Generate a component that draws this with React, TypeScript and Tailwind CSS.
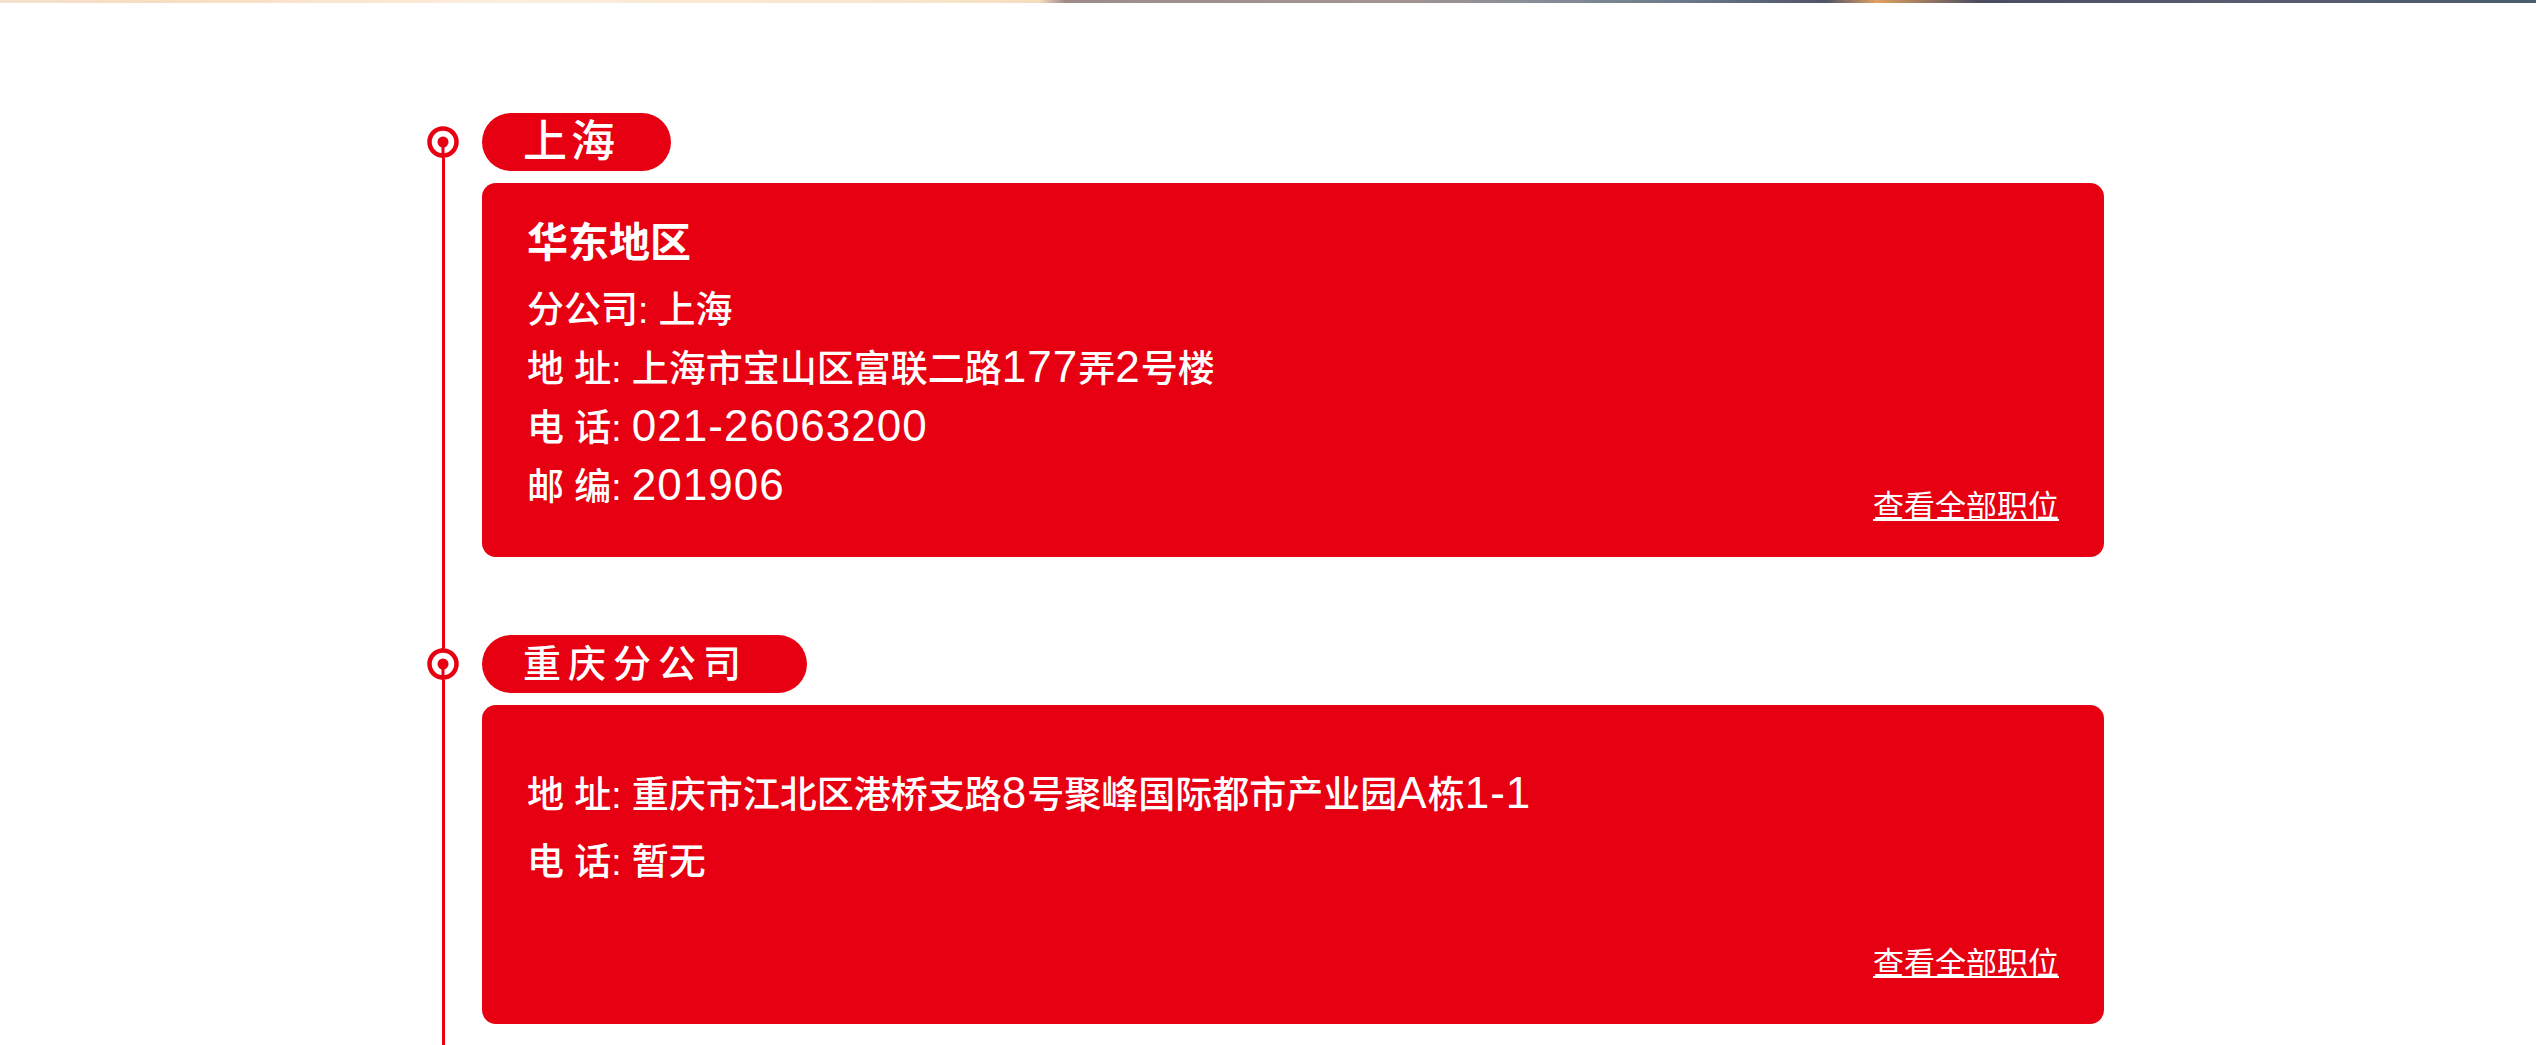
import React from 'react'

const RED = '#e60012'

type Office = {
  city: string
  cityClass: string
  pillWidth: string
  title?: string
  lines: string[]
  bodyClass: string
  linkClass: string
}

const offices: Office[] = [
  {
    city: '上海',
    cityClass: 'text-[44px] tracking-[4px]',
    pillWidth: 'w-[189px]',
    title: '华东地区',
    lines: ['分公司: 上海', '地 址: 上海市宝山区富联二路177弄2号楼', '电 话: 021-26063200', '邮 编: 201906'],
    bodyClass: 'pt-[30px] pb-[30px]',
    linkClass: '-mt-[30px]',
  },
  {
    city: '重庆分公司',
    cityClass: 'text-[38px] tracking-[7px]',
    pillWidth: 'w-[325px]',
    lines: ['地 址: 重庆市江北区港桥支路8号聚峰国际都市产业园A栋1-1', '电 话: 暂无'],
    bodyClass: 'pt-[61px] pb-[40px]',
    linkClass: 'mt-[52px]',
  },
]

// latin letters and digits run wider than the CJK glyphs, like YaHei does
const Mixed = ({ text }: { text: string }) => (
  <>
    {text.split(/([0-9A-Za-z\-]+)/).map((part, i) =>
      /^[0-9A-Za-z\-]+$/.test(part) ? (
        <span key={i} className="text-[44px] leading-none tracking-[1px]">
          {part}
        </span>
      ) : (
        <React.Fragment key={i}>{part}</React.Fragment>
      )
    )}
  </>
)

const Dot = ({ first }: { first: boolean }) => (
  <svg width="32" height="32" viewBox="0 0 32 32" className="shrink-0">
    {!first && <line x1="16" y1="0" x2="16" y2="16" stroke={RED} strokeWidth="3" />}
    <circle cx="16" cy="16" r="13.5" fill="#fff" stroke={RED} strokeWidth="4.5" />
    <line x1="16" y1="16" x2="16" y2="32" stroke={RED} strokeWidth="3" />
    <circle cx="16" cy="16" r="5.5" fill={RED} />
  </svg>
)

const OfficeItem = ({ office, first, last }: { office: Office; first: boolean; last: boolean }) => (
  <div className="flex gap-[23px]">
    <div className="flex w-[32px] flex-col items-center">
      <div className={`h-[13px] w-[3px] ${first ? '' : 'bg-[#e60012]'}`} />
      <Dot first={first} />
      <div className="w-[3px] flex-1 bg-[#e60012]" />
    </div>
    <div className={`flex w-[1622px] flex-col ${last ? 'pb-[80px]' : 'pb-[78px]'}`}>
      <div
        className={`flex h-[58px] items-center rounded-full bg-[#e60012] pl-[41px] font-medium leading-none text-white ${office.pillWidth} ${office.cityClass}`}
      >
        {office.city}
      </div>
      <div className={`mt-[12px] flex flex-col rounded-[14px] bg-[#e60012] pl-[45px] pr-[45px] text-white ${office.bodyClass}`}>
        {office.title && (
          <div className="mb-[8px] text-[41px] font-bold leading-[60px]">{office.title}</div>
        )}
        {office.lines.map((line, i) => (
          <div
            key={i}
            className={`text-[37px] font-medium leading-[59px] ${i > 0 && !office.title ? 'mt-[8px]' : ''}`}
          >
            <Mixed text={line} />
          </div>
        ))}
        <div className={`flex justify-end ${office.linkClass}`}>
          <a className="text-[31px] leading-[40px] underline decoration-[2px] underline-offset-[2px]">
            查看全部职位
          </a>
        </div>
      </div>
    </div>
  </div>
)

export default function App() {
  return (
    <div
      className="min-h-screen overflow-hidden bg-white"
      style={{ fontFamily: '"Liberation Sans", "Noto Sans CJK SC", sans-serif' }}
    >
      <div className="h-[3px] w-full bg-[linear-gradient(90deg,#f3e2cf_0%,#f8dcc0_6%,#fbeedd_20%,#f7e3c8_38%,#f6dcbc_41%,#9d8c8a_42%,#a39391_55%,#8a8f98_60%,#6d7c8a_66%,#4f5466_72%,#e0a060_74%,#4a4d60_78%,#5a5c6e_88%,#4a5d6a_100%)]" />
      <div className="mx-auto w-[1682px] pr-[5px] pt-[110px]">
        {offices.map((o, i) => (
          <OfficeItem key={o.city} office={o} first={i === 0} last={i === offices.length - 1} />
        ))}
      </div>
    </div>
  )
}
